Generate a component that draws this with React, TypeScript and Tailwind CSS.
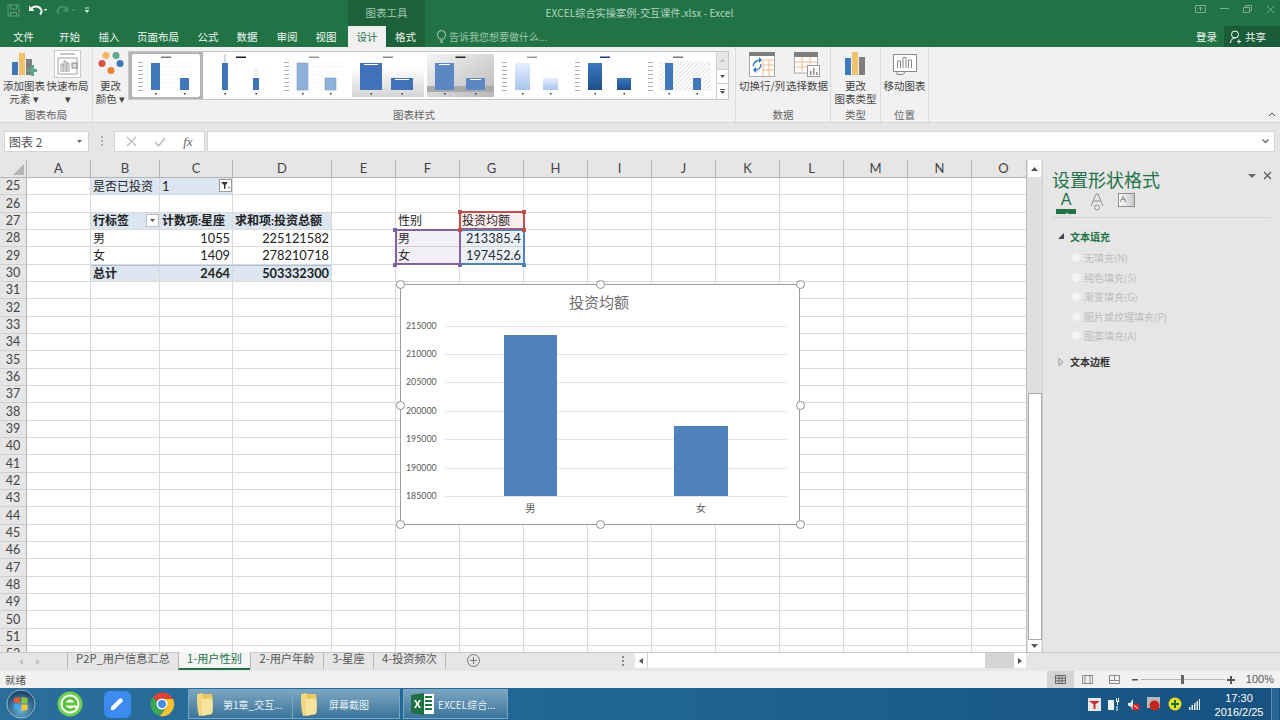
import React from "react";

const CJK = '"Noto Sans CJK SC", "Noto Sans", sans-serif';
const CELL = 'Lato, "Noto Sans CJK SC", sans-serif';

const COLS = ["A", "B", "C", "D", "E", "F", "G", "H", "I", "J", "K", "L", "M", "N", "O"];
const ROWS = Array.from({ length: 28 }, (_, i) => 25 + i);

type Cell = { t?: string; c?: string };
const cells: Record<string, Cell> = {
  B25: { t: "是否已投资", c: "bg-[#dce6f1]" },
  C25: { t: "1", c: "bg-[#dce6f1]" },
  B27: { t: "行标签", c: "bg-[#dce6f1] font-bold" },
  C27: { t: "计数项:星座", c: "bg-[#dce6f1] font-bold" },
  D27: { t: "求和项:投资总额", c: "bg-[#dce6f1] font-bold" },
  B28: { t: "男" },
  C28: { t: "1055", c: "justify-end" },
  D28: { t: "225121582", c: "justify-end" },
  B29: { t: "女" },
  C29: { t: "1409", c: "justify-end" },
  D29: { t: "278210718", c: "justify-end" },
  B30: { t: "总计", c: "bg-[#dce6f1] font-bold border-t border-t-[#a6c0dd]" },
  C30: { t: "2464", c: "bg-[#dce6f1] font-bold justify-end border-t border-t-[#a6c0dd]" },
  D30: { t: "503332300", c: "bg-[#dce6f1] font-bold justify-end border-t border-t-[#a6c0dd]" },
  F27: { t: "性别" },
  G27: { t: "投资均额" },
  F28: { t: "男" },
  G28: { t: "213385.4", c: "justify-end" },
  F29: { t: "女" },
  G29: { t: "197452.6", c: "justify-end" },
};

function QatIcons() {
  return (
    <div className="flex items-center h-[20px] pl-[7px] gap-[8px]">
      <svg width="13" height="13" viewBox="0 0 13 13" fill="none" stroke="#5f9b7c" strokeWidth="1">
        <path d="M1 1h11v11H1z" />
        <path d="M3.5 1v4h6V1M3.5 12V8.5h6V12" />
      </svg>
      <svg width="20" height="12" viewBox="0 0 20 12" fill="none">
        <path d="M2.5 5.5C5 2 10 1.500 12.5 4.500c1.500 2 1 4.500-.5 6" stroke="#fff" strokeWidth="2" />
        <path d="M1 1.5v5.500h5.500z" fill="#fff" />
        <path d="M15.500 5h4l-2 2z" fill="#dfeee6" />
      </svg>
      <svg width="20" height="12" viewBox="0 0 20 12" fill="none">
        <path d="M11 5.500C9 2.500 4.500 2 2.500 4.500 1 6.500 1.500 8.500 2.500 10" stroke="#4f916f" strokeWidth="1.800" />
        <path d="M12 2v5.500H7z" fill="#4f916f" />
        <path d="M15.500 5h4l-2 2z" fill="#4f916f" />
      </svg>
      <svg width="6" height="7" viewBox="0 0 6 7">
        <path d="M1 0.5h4v1H1zM0.5 3h5L3 6z" fill="#d9ebe1" />
      </svg>
    </div>
  );
}

function TabLabel({ t, active }: { t: string; active?: boolean }) {
  return (
    <div
      className={
        "h-[21px] flex items-center justify-center text-[10.5px] " +
        (active ? "bg-[#f1f1f1] text-[#217346]" : "text-[#f0f6f2]")
      }
    >
      {t}
    </div>
  );
}

function Thumb({
  w,
  bg,
  fill,
  stroke,
  grid,
  ticks,
  title,
  stems,
  label,
  hatch,
  floor,
  x1,
  x2,
  bw,
}: {
  w: number;
  bg: string;
  fill: string;
  stroke?: string;
  grid?: boolean;
  ticks?: boolean;
  title: string;
  stems?: boolean;
  label?: boolean;
  hatch?: boolean;
  floor?: boolean;
  x1: number;
  x2: number;
  bw: number;
}) {
  const id = "hatch" + x1 + x2 + bw;
  return (
    <svg width={w} height="43" viewBox={`0 0 ${w} 43`} className="shrink-0">
      <defs>
        <pattern id={id} width="3" height="3" patternUnits="userSpaceOnUse" patternTransform="rotate(45)">
          <rect width="3" height="3" fill="#ffffff" />
          <rect width="1" height="3" fill="#e2e2e2" />
        </pattern>
        <linearGradient id="silver" x1="0" y1="0" x2="1" y2="1">
          <stop offset="0" stopColor="#f4f4f4" />
          <stop offset="1" stopColor="#b9b9b9" />
        </linearGradient>
        <linearGradient id="pale" x1="0" y1="0" x2="0" y2="1">
          <stop offset="0" stopColor="#e6efff" />
          <stop offset="1" stopColor="#a9c4ee" />
        </linearGradient>
        <linearGradient id="deep" x1="0" y1="0" x2="0" y2="1">
          <stop offset="0" stopColor="#3a78c0" />
          <stop offset="1" stopColor="#1f4f8b" />
        </linearGradient>
        <linearGradient id="fade" x1="0" y1="0" x2="0" y2="1">
          <stop offset="0.3" stopColor="#ffffff" />
          <stop offset="1" stopColor="#d4d4d4" />
        </linearGradient>
      </defs>
      <rect width={w} height="43" fill={bg} />
      {hatch && <rect x={16} y="7" width={w - 18} height="30" fill={`url(#${id})`} />}
      {floor && <rect width={w} height="6" y="32" fill="#aaaaaa" />}
      <rect x={w / 2 - 5} y="2.5" width="10" height="1.5" fill={title} />
      {grid &&
        [9, 13, 17, 21, 25, 29, 33, 36].map((y) => (
          <line key={y} x1={12} x2={w - 4} y1={y} y2={y} stroke="#f0f0f0" strokeWidth="0.5" />
        ))}
      {ticks &&
        [8, 12, 16, 20, 24, 28, 32, 36].map((y) => (
          <rect key={y} x={5} y={y} width="5" height="0.8" fill="#9c9c9c" />
        ))}
      {stems && (
        <>
          <line x1={x1 + bw / 2} x2={x1 + bw / 2} y1="0" y2="10" stroke="#b0b0b0" />
          <line x1={x2 + bw / 2} x2={x2 + bw / 2} y1="15" y2="25" stroke="#c4c4c4" strokeDasharray="1 1" />
        </>
      )}
      <rect x={x1} y="9" width={bw} height="27" fill={fill} stroke={stroke} strokeWidth="0.5" />
      <rect x={x2} y="24" width={bw} height="12" fill={fill} stroke={stroke} strokeWidth="0.5" />
      {label && (
        <>
          <rect x={x1 + 4} y="10" width={bw - 8} height="1" fill="#ffffff" />
          <rect x={x2 + 4} y="25" width={bw - 8} height="1" fill="#ffffff" />
        </>
      )}
      <rect x={x1 + bw / 2 - 0.5} y="39" width="1.5" height="1.5" fill="#333" />
      <rect x={x2 + bw / 2 - 0.5} y="39" width="1.5" height="1.5" fill="#333" />
    </svg>
  );
}

function RibbonButton({ icon, lines, w }: { icon: React.ReactNode; lines: string[]; w: string }) {
  return (
    <div className={"flex flex-col items-center text-[10.5px] leading-[13px] text-[#444] " + w}>
      <div className="h-[28px] flex items-center justify-center">{icon}</div>
      <div className="mt-[1px] text-center whitespace-nowrap">
        {lines.map((l) => (
          <div key={l}>{l}</div>
        ))}
      </div>
    </div>
  );
}

function Group({
  label,
  children,
  className,
}: {
  label: string;
  children: React.ReactNode;
  className: string;
}) {
  return (
    <div className={"flex flex-col h-full border-r border-r-[#dcdcdc] " + className}>
      <div className="flex-1 flex items-start pt-[3px] min-h-0">{children}</div>
      <div className="h-[16px] pt-[2px] text-center text-[10.5px] leading-[13px] text-[#666] whitespace-nowrap">{label}</div>
    </div>
  );
}

function AddElementIcon() {
  return (
    <svg width="26" height="24" viewBox="0 0 26 24">
      <rect x="1" y="10" width="6" height="13" fill="#3f78b9" />
      <rect x="8" y="1" width="6" height="22" fill="#f2c26b" />
      <rect x="15" y="7" width="6" height="16" fill="#7e7e7e" />
      <path d="M20 13h3v4h3v3h-3v4h-3v-4h-4v-3h4z" fill="#5aa687" />
    </svg>
  );
}
function QuickLayoutIcon() {
  return (
    <svg width="27" height="28" viewBox="0 0 27 28" fill="none">
      <rect x="0.5" y="0.5" width="26" height="27" fill="#fff" stroke="#c8c8c8" />
      <path d="M6 4h15" stroke="#8a8a8a" />
      <rect x="4" y="8" width="19" height="16" stroke="#a0a0a0" />
      <path d="M7 22V14h2v8M10 22V11h2v11M13 22v-9h2v9" stroke="#888" strokeWidth="0.8" />
      <rect x="18" y="13" width="5" height="5" stroke="#888" fill="#e0e0e0" />
    </svg>
  );
}
function ColorsIcon() {
  return (
    <svg width="26" height="26" viewBox="0 0 26 26">
      <circle cx="8" cy="4.5" r="3.5" fill="#f4b35e" />
      <circle cx="18" cy="4.5" r="3.5" fill="#5ea78b" />
      <circle cx="4" cy="12.5" r="3.5" fill="#d9503f" />
      <circle cx="22" cy="12.5" r="3.5" fill="#3f78b9" />
      <circle cx="13" cy="19.5" r="3.5" fill="#ec8235" />
    </svg>
  );
}
function SwitchIcon() {
  return (
    <svg width="26" height="25" viewBox="0 0 26 25" fill="none">
      <rect x="0.5" y="0.5" width="25" height="24" fill="#fff" stroke="#aaa" />
      <rect x="0" y="0" width="26" height="4" fill="#7f7f7f" />
      <path d="M14 8h11M14 13h11M14 18h11M14 8v16M20 8v16" stroke="#f0b98a" />
      <path d="M4 14c1-4 4-6 8-6" stroke="#2e75b6" strokeWidth="1.3" />
      <path d="M10 5l3 3-3 3z" fill="#2e75b6" />
      <path d="M12 12c0 4-3 6-6 6" stroke="#2e75b6" strokeWidth="1.3" />
      <path d="M7 15l-3 3 3 3z" fill="#2e75b6" />
    </svg>
  );
}
function SelectDataIcon() {
  return (
    <svg width="26" height="25" viewBox="0 0 26 25" fill="none">
      <rect x="0.5" y="2" width="23" height="19" fill="#fff" stroke="#aaa" />
      <rect x="0" y="0" width="24" height="5" fill="#7f7f7f" />
      <path d="M1 10h22M1 15h22M8 5v16M16 5v16" stroke="#f0b98a" />
      <rect x="13.5" y="13.5" width="12" height="11" fill="#fff" stroke="#999" />
      <path d="M16 23v-4h1.500v4zM19 23v-7h1.500v7zM22 23v-3h1.500v3z" fill="#8b8b8b" />
    </svg>
  );
}
function ChangeTypeIcon() {
  return (
    <svg width="21" height="24" viewBox="0 0 21 24">
      <rect x="0" y="6" width="6" height="17" fill="#3f78b9" />
      <rect x="7" y="0" width="6" height="23" fill="#f2c26b" />
      <rect x="14" y="5" width="6" height="18" fill="#7e7e7e" />
    </svg>
  );
}
function MoveChartIcon() {
  return (
    <svg width="24" height="21" viewBox="0 0 24 21" fill="none" stroke="#8a8a8a">
      <rect x="0.5" y="0.5" width="23" height="17" fill="#fff" />
      <path d="M4.5 14V7h3v7M10 14V3.500h3V14M15.500 14V6h3v8" />
      <path d="M4 18v2.500h6l2-2.500" />
    </svg>
  );
}

function Ribbon() {
  return (
    <div className="h-[76px] bg-[#f1f1f1] border-b border-b-[#d8d8d8] flex text-[#444] relative">
      <Group label="图表布局" className="w-[93px]">
        <RibbonButton w="w-[44px] ml-[2px]" icon={<AddElementIcon />} lines={["添加图表", "元素 ▾"]} />
        <RibbonButton w="w-[43px]" icon={<QuickLayoutIcon />} lines={["快速布局", "▾"]} />
      </Group>
      <Group label="图表样式" className="w-[643px]">
        <div className="w-[35px]">
          <RibbonButton w="w-[35px]" icon={<ColorsIcon />} lines={["更改", "颜色 ▾"]} />
        </div>
        <div className="flex h-[49px] w-[601px] mt-[1px] border border-[#c6c6c6] bg-white">
          <div className="flex items-center flex-1 gap-[3px] overflow-hidden">
            <div className="border-[3px] border-[#b5b5b5] h-[47px] w-[74px] shrink-0 flex items-center justify-center">
              <Thumb w={66} bg="#ffffff" fill="#3f78b9" grid ticks title="#777" x1={18} x2={47} bw={9} />
            </div>
            <Thumb w={70} bg="#ffffff" fill="#3f78b9" title="#222" stems x1={16} x2={47} bw={6} />
            <Thumb w={70} bg="#ffffff" fill="#8eb0db" stroke="#6f97c9" grid ticks title="#999" x1={18} x2={46} bw={11} />
            <Thumb w={72} bg="url(#fade)" fill="#3f72b9" title="#888" label x1={8} x2={39} bw={22} />
            <Thumb w={67} bg="url(#silver)" fill="#5b88c2" title="#222" label floor x1={8} x2={39} bw={19} />
            <Thumb w={70} bg="#ffffff" fill="url(#pale)" ticks title="#999" x1={18} x2={46} bw={15} />
            <Thumb w={70} bg="#ffffff" fill="url(#deep)" ticks title="#1f3f77" x1={18} x2={47} bw={14} />
            <Thumb w={70} bg="#ffffff" fill="#3f78b9" ticks title="#777" hatch x1={22} x2={50} bw={8} />
          </div>
          <div className="w-[12px] flex flex-col border-l border-l-[#d0d0d0] bg-white text-[#666]">
            <div className="h-[17px] bg-[#e6e6e6] flex items-center justify-center">
              <svg width="5" height="3"><path d="M0 3h5L2.5 0z" fill="#bbb" /></svg>
            </div>
            <div className="h-[15px] flex items-center justify-center border-y border-y-[#d0d0d0]">
              <svg width="5" height="3"><path d="M0 0h5L2.5 3z" fill="#555" /></svg>
            </div>
            <div className="flex-1 flex items-center justify-center">
              <svg width="5" height="6"><path d="M0 0h5v1H0zM0 2h5L2.5 5z" fill="#555" /></svg>
            </div>
          </div>
        </div>
      </Group>
      <Group label="数据" className="w-[95px]">
        <RibbonButton w="w-[46px] ml-[3px]" icon={<SwitchIcon />} lines={["切换行/列"]} />
        <RibbonButton w="w-[44px]" icon={<SelectDataIcon />} lines={["选择数据"]} />
      </Group>
      <Group label="类型" className="w-[50px]">
        <RibbonButton w="w-[49px]" icon={<ChangeTypeIcon />} lines={["更改", "图表类型"]} />
      </Group>
      <Group label="位置" className="w-[48px]">
        <RibbonButton w="w-[47px]" icon={<MoveChartIcon />} lines={["移动图表"]} />
      </Group>
      <div className="absolute right-[4px] bottom-[5px]">
        <svg width="8" height="5" viewBox="0 0 8 5" fill="none" stroke="#555">
          <path d="M1 4l3-3 3 3" />
        </svg>
      </div>
    </div>
  );
}

function TitleBar() {
  return (
    <div className="h-[47px] bg-[#217346] flex text-[#e8f1ec]">
      <div className="w-[348px] flex flex-col">
        <QatIcons />
        <div className="mt-[6px] flex">
          {[
            ["文件", 47],
            ["开始", 45],
            ["插入", 34],
            ["页面布局", 64],
            ["公式", 36],
            ["数据", 42],
            ["审阅", 38],
            ["视图", 40],
          ].map(([t, w]) => (
            <div key={t} style={{ width: w as number }}>
              <TabLabel t={t as string} />
            </div>
          ))}
        </div>
      </div>
      <div className="w-[77px] bg-[#1c6139] flex flex-col">
        <div className="h-[26px] flex items-center justify-center text-[10.5px] text-[#9fc7b0]">图表工具</div>
        <div className="flex">
          <div className="w-[38px]">
            <TabLabel t="设计" active />
          </div>
          <div className="w-[39px]">
            <TabLabel t="格式" />
          </div>
        </div>
      </div>
      <div className="flex-1 flex flex-col relative">
        <div className="h-[26px] flex items-center justify-between pr-[5px]">
          <div className="w-[415px] text-center text-[10.2px] text-[#b5d3c2] whitespace-nowrap ml-[7px]">
            EXCEL综合实操案例-交互课件.xlsx - Excel
          </div>
          <div className="flex items-center gap-[14px] -mt-[8px]">
            <svg width="11" height="8" viewBox="0 0 11 8" fill="none" stroke="#78ad90"><path d="M.5.5h10v7H.5zM5.5 6V2M3.5 4l2-2 2 2" /></svg>
            <svg width="9" height="2"><rect width="9" height="1" fill="#78ad90" /></svg>
            <svg width="9" height="8" viewBox="0 0 9 8" fill="none" stroke="#78ad90"><path d="M.5 2.5h6v5h-6zM2.5 2.5v-2h6v5h-2" /></svg>
            <svg width="9" height="9" viewBox="0 0 9 9" stroke="#78ad90"><path d="M1 1l7 7M8 1L1 8" /></svg>
          </div>
        </div>
        <div className="flex items-center h-[21px]">
          <div className="flex items-center gap-[3px] ml-[12px] text-[10px] text-[#9dc6ae]">
            <svg width="9" height="13" viewBox="0 0 9 13" fill="none" stroke="#b5d3c2"><path d="M2.5 9C1 7.500.5 6.500.5 4.500a4 4 0 0 1 8 0c0 2-.5 3-2 4.500zM3 11h3M3.500 12.500h2" /></svg>
            <span>告诉我您想要做什么...</span>
          </div>
          <div className="ml-auto text-[10.5px] text-[#f0f6f2] mr-[7px]">登录</div>
          <div className="w-[56px] h-[21px] bg-[#195c37] flex items-center pl-[6px] gap-[3px] text-[10.5px] text-[#f0f6f2]">
            <svg width="12" height="14" viewBox="0 0 12 14" fill="none" stroke="#fff"><circle cx="5" cy="4.5" r="3.5" /><path d="M.5 13c0-3 2-5 4.500-5M9 9.500v4M7 11.500h4" /></svg>
            <span>共享</span>
          </div>
        </div>
      </div>
    </div>
  );
}

function FormulaBar() {
  return (
    <div className="h-[37px] bg-[#e6e6e6] flex items-start pt-[8px] pl-[4px] pr-[5px]">
      <div className="w-[85px] h-[21px] bg-white border border-[#d4d4d4] flex items-center justify-between pl-[4px] pr-[6px] text-[12px] text-[#555]">
        <span>图表 2</span>
        <svg width="5" height="3"><path d="M0 0h5L2.5 3z" fill="#666" /></svg>
      </div>
      <div className="w-[25px] h-[21px] flex items-center justify-center">
        <svg width="2" height="11"><path d="M0 0h2v2H0zM0 4h2v2H0zM0 8h2v2H0z" fill="#b0b0b0" /></svg>
      </div>
      <div className="w-[91px] h-[21px] bg-white border border-[#d4d4d4] flex items-center justify-around px-[3px]">
        <svg width="11" height="11" viewBox="0 0 11 11" stroke="#bbb" strokeWidth="1.2"><path d="M1 1l9 9M10 1l-9 9" /></svg>
        <svg width="12" height="10" viewBox="0 0 12 10" fill="none" stroke="#bbb" strokeWidth="1.5"><path d="M1 5l3.500 4L11 1" /></svg>
        <span className="italic text-[13px] text-[#666] font-['Liberation_Serif',serif]">fx</span>
      </div>
      <div className="flex-1 h-[21px] ml-[2px] bg-white border border-[#d4d4d4] flex items-center justify-end pr-[5px]">
        <svg width="7" height="5" viewBox="0 0 7 5" fill="none" stroke="#666" strokeWidth="1.3"><path d="M.5.5l3 3 3-3" /></svg>
      </div>
    </div>
  );
}

function Handle({ className }: { className: string }) {
  return <div className={"absolute w-[9px] h-[9px] rounded-full bg-white border-[1.5px] border-[#8f8f8f] " + className} />;
}

function SheetGrid() {
  return (
    <div className="relative flex-1 h-full overflow-hidden bg-white" style={{ fontFamily: CELL }}>
      <div className="grid w-[1036px] grid-cols-[27px_64px_69px_73px_99px_64px_64px_64px_64px_64px_64px_64px_64px_64px_64px_64px] grid-rows-[18px_repeat(28,17.33px)]">
        <div className="bg-[#e6e6e6] border-r border-b border-[#b5b5b5] relative">
          <svg className="absolute right-[2px] bottom-[2px]" width="11" height="11"><path d="M11 0v11H0z" fill="#b4b4b4" /></svg>
        </div>
        {COLS.map((c) => (
          <div key={c} className="bg-[#e6e6e6] border-r border-r-[#b5b5b5] border-b border-b-[#b5b5b5] flex items-center justify-center text-[13px] text-[#444]">
            {c}
          </div>
        ))}
        {ROWS.map((r) => (
          <React.Fragment key={r}>
            <div className="bg-[#e6e6e6] border-r border-r-[#b5b5b5] border-b border-b-[#cfcfcf] flex items-center justify-center pt-[1px] text-[12.5px] leading-none text-[#444]">
              {r}
            </div>
            {COLS.map((c) => {
              const cell = cells[c + r];
              const numeric = cell?.t ? /^[\d.]+$/.test(cell.t) : false;
              return (
                <div
                  key={c}
                  className={
                    "border-r border-r-[#dadada] border-b border-b-[#dadada] flex items-center px-[2px] leading-none text-[#222] whitespace-nowrap min-w-0 " +
                    (numeric ? "text-[12.8px] " : "text-[12px] pt-[1px] ") +
                    (cell?.c ?? "")
                  }
                >
                  {cell?.t}
                </div>
              );
            })}
          </React.Fragment>
        ))}
      </div>

      <div className="absolute left-[219px] top-[19px] w-[13px] h-[13px] bg-white border border-[#9c9c9c] flex items-center justify-center">
        <svg width="9" height="8" viewBox="0 0 9 8"><path d="M0 0h7L4.5 3v3.500L3 7V3z" fill="#333" /><path d="M7.5 4.500l1.500 1-1.500 1z" fill="#333" /></svg>
      </div>
      <div className="absolute left-[146px] top-[54px] w-[13px] h-[13px] bg-white border border-[#c0c0c0] flex items-center justify-center">
        <svg width="5" height="3"><path d="M0 0h5L2.5 3z" fill="#555" /></svg>
      </div>

      {/* range highlights */}
      <div className="absolute left-[459px] top-[51px] w-[66px] h-[19px] border-2 border-[#c0504d] bg-[#c0504d]/10" />
      <div className="absolute left-[395px] top-[69px] w-[66px] h-[36px] border-2 border-[#8064a2] bg-[#8064a2]/10" />
      <div className="absolute left-[459px] top-[69px] w-[66px] h-[36px] border-2 border-[#4f81bd] bg-[#4f81bd]/10 border-l-[#8064a2]" />
      {[
        ["left-[458px] top-[50px]", "bg-[#c0504d]"],
        ["left-[522px] top-[50px]", "bg-[#c0504d]"],
        ["left-[458px] top-[68px]", "bg-[#c0504d]"],
        ["left-[522px] top-[68px]", "bg-[#c0504d]"],
        ["left-[393px] top-[68px]", "bg-[#8064a2]"],
        ["left-[393px] top-[103px]", "bg-[#8064a2]"],
        ["left-[458px] top-[103px]", "bg-[#8064a2]"],
        ["left-[522px] top-[103px]", "bg-[#4f81bd]"],
      ].map(([p, c]) => (
        <div key={p} className={"absolute w-[4px] h-[4px] " + p + " " + c} />
      ))}

      {/* chart */}
      <div className="absolute left-[400px] top-[124px] w-[400px] h-[241px] bg-white border border-[#9f9f9f] pl-[5px]">
        <div className="text-center text-[15px] leading-[20px] pt-[7px] pr-[7px] text-[#6f6f6f] h-[41px]">投资均额</div>
        <div className="relative w-[381px] h-[172px]">
          {[215000, 210000, 205000, 200000, 195000, 190000, 185000].map((v, i) => (
            <div key={v} className="absolute left-0 right-0 flex items-center h-[10px]" style={{ top: i * 28.4 - 5 }}>
              <span className="w-[39px] text-[8.8px] leading-none text-[#595959]">{v}</span>
              <div className="flex-1 h-px bg-[#e4e4e4]" />
            </div>
          ))}
          <div className="absolute left-[98px] top-[9px] w-[53px] h-[161px] bg-[#4f81bd]" />
          <div className="absolute left-[268px] top-[100px] w-[54px] h-[70px] bg-[#4f81bd]" />
          <div className="absolute left-[98px] top-[177px] w-[53px] text-center text-[10px] leading-none text-[#595959]">男</div>
          <div className="absolute left-[268px] top-[177px] w-[54px] text-center text-[10px] leading-none text-[#595959]">女</div>
        </div>
      </div>
      <Handle className="left-[396px] top-[120px]" />
      <Handle className="left-[596px] top-[120px]" />
      <Handle className="left-[796px] top-[120px]" />
      <Handle className="left-[396px] top-[241px]" />
      <Handle className="left-[796px] top-[241px]" />
      <Handle className="left-[396px] top-[360px]" />
      <Handle className="left-[596px] top-[360px]" />
      <Handle className="left-[796px] top-[360px]" />
    </div>
  );
}

function VScroll() {
  return (
    <div className="w-[16px] h-full bg-[#e0e0e0] flex flex-col items-center border-l border-l-[#bcbcbc]">
      <div className="w-[13px] h-[17px] bg-white flex items-center justify-center">
        <svg width="7" height="4"><path d="M0 4h7L3.5 0z" fill="#555" /></svg>
      </div>
      <div className="flex-1 w-full flex flex-col justify-end">
        <div className="h-[247px] w-[14px] mx-auto bg-white border border-[#ababab]" />
      </div>
      <div className="w-[13px] h-[12px] bg-white flex items-center justify-center">
        <svg width="7" height="4"><path d="M0 0h7L3.5 4z" fill="#555" /></svg>
      </div>
    </div>
  );
}

function FormatPane() {
  const radios = ["无填充(N)", "纯色填充(S)", "渐变填充(G)", "图片或纹理填充(P)", "图案填充(A)"];
  return (
    <div className="w-[238px] h-full bg-[#e6e6e6] border-l border-l-[#cfcfcf] relative pl-[9px] pt-[6px]">
      <div className="text-[18px] leading-[26px] text-[#217346]">设置形状格式</div>
      <div className="absolute right-[8px] top-[11px] flex items-center gap-[7px]">
        <svg width="8" height="4"><path d="M0 0h8L4 4z" fill="#666" /></svg>
        <svg width="9" height="9" viewBox="0 0 9 9" stroke="#555" strokeWidth="1.2"><path d="M1 1l7 7M8 1L1 8" /></svg>
      </div>
      <div className="flex items-start gap-[14px] ml-[4px] h-[26px]">
        <div className="w-[20px] flex flex-col items-center">
          <span className="text-[16px] leading-[16px] text-[#217346] font-['Liberation_Sans',sans-serif]">A</span>
          <div className="w-[20px] h-[5px] bg-[#217346] mt-[1px]" />
        </div>
        <svg width="14" height="19" viewBox="0 0 14 19" fill="none" stroke="#8f8f8f">
          <path d="M1 14L6 2h2l5 12M3.5 9h7" />
          <circle cx="7" cy="15.5" r="2.5" fill="#e6e6e6" />
        </svg>
        <div className="w-[17px] h-[14px] mt-[1px] border border-[#8f8f8f] bg-gradient-to-r from-white to-[#c8c8c8] text-[9px] leading-[11px] pl-[1px] text-[#555] font-['Liberation_Sans',sans-serif]">
          A
        </div>
      </div>
      <div className="relative h-px bg-[#d4d4d4] mr-[10px] mt-[-1px]">
        <svg className="absolute left-[9px] -top-[5px]" width="12" height="6" fill="none" stroke="#cfcfcf"><path d="M0 6l6-5 6 5" /></svg>
      </div>
      <div className="flex items-center h-[22px] mt-[7px] text-[10px] font-bold">
        <svg className="ml-[6px] mr-[6px]" width="6" height="6"><path d="M6 0v6H0z" fill="#444" /></svg>
        <span className="text-[#217346]">文本填充</span>
      </div>
      <div className="flex flex-col ml-[20px] mt-[1px]">
        {radios.map((r) => (
          <div key={r} className="h-[19.5px] flex items-center gap-[3px] text-[10px] text-[#bdbdbd] whitespace-nowrap">
            <div className="w-[9px] h-[9px] rounded-full bg-[#f3f3f3]" />
            <span>{r}</span>
          </div>
        ))}
      </div>
      <div className="flex items-center h-[20px] mt-[6px] text-[10px] font-bold text-[#333]">
        <svg className="ml-[6px] mr-[6px]" width="6" height="8" fill="none" stroke="#999"><path d="M1 .5l4 3.500-4 3.500z" /></svg>
        <span>文本边框</span>
      </div>
    </div>
  );
}

function SheetTabs() {
  const tabs = [
    ["P2P_用户信息汇总", 111],
    ["1-用户性别", 72],
    ["2-用户年龄", 73],
    ["3-星座", 50],
    ["4-投资频次", 72],
  ] as const;
  return (
    <div className="h-[19px] bg-[#e6e6e6] flex items-start text-[11.2px] leading-none text-[#555] border-t border-t-[#c8c8c8]">
      <div className="w-[67px] h-[17px] flex items-center pl-[19px] gap-[13px] shrink-0">
        <svg width="4" height="6"><path d="M4 0v6L0 3z" fill="#c2c2c2" /></svg>
        <svg width="4" height="6"><path d="M0 0v6l4-3z" fill="#c2c2c2" /></svg>
      </div>
      {tabs.map(([t, w], i) => (
        <div
          key={t}
          style={{ width: w }}
          className={
            "shrink-0 flex items-center justify-center whitespace-nowrap border-l border-l-[#b8b8b8] " +
            (i === 1 ? "h-[18px] -mt-px pb-[3px] bg-[#f5f5f5] text-[#217346] border-b-2 border-b-[#217346]" : "h-[16px] pb-[5px]")
          }
        >
          {t}
        </div>
      ))}
      <div className="h-[16px] border-l border-l-[#b8b8b8] shrink-0" />
      <div className="ml-[21px] mt-[1px] w-[15px] shrink-0">
        <svg width="13" height="13" viewBox="0 0 13 13" fill="none" stroke="#777"><circle cx="6.5" cy="6.5" r="6" /><path d="M6.5 3v7M3 6.500h7" /></svg>
      </div>
      <div className="ml-[130px] w-[22px] h-[15px] flex items-center justify-center shrink-0">
        <svg width="2" height="10"><path d="M0 0h2v2H0zM0 4h2v2H0zM0 8h2v2H0z" fill="#888" /></svg>
      </div>
      <div className="w-[12px] h-[15px] ml-px bg-white flex items-center justify-center shrink-0">
        <svg width="4" height="6"><path d="M4 0v6L0 3z" fill="#555" /></svg>
      </div>
      <div className="w-[339px] h-[15px] bg-white border-x border-[#d4d4d4] shrink-0" />
      <div className="w-[28px] h-[15px] bg-[#d4d4d4] shrink-0" />
      <div className="w-[12px] h-[15px] bg-white flex items-center justify-center shrink-0">
        <svg width="4" height="6"><path d="M0 0v6l4-3z" fill="#555" /></svg>
      </div>
    </div>
  );
}

function StatusBar() {
  return (
    <div className="h-[17px] bg-[#f1f1f1] flex items-center text-[10.5px] text-[#555]">
      <span className="pl-[5px]">就绪</span>
      <div className="ml-auto flex items-center h-full">
        <div className="w-[27px] h-full bg-[#d4d4d4] flex items-center justify-center">
          <svg width="11" height="9" viewBox="0 0 11 9" fill="none" stroke="#666"><path d="M.5.5h10v8H.5zM.5 3.200h10M.5 5.800h10M4 .5v8M7 .5v8" /></svg>
        </div>
        <div className="w-[28px] flex items-center justify-center">
          <svg width="11" height="9" viewBox="0 0 11 9" fill="none" stroke="#888"><path d="M.5.5h10v8H.5zM3 .5v8M8 .5v8" /></svg>
        </div>
        <div className="w-[26px] flex items-center justify-center">
          <svg width="11" height="9" viewBox="0 0 11 9" fill="none" stroke="#888"><path d="M.5.5h10v8H.5zM.5 5.500h10M5.500 .5v5" /></svg>
        </div>
        <svg className="ml-[4px]" width="6" height="2"><rect width="6" height="1.5" fill="#555" /></svg>
        <div className="relative w-[84px] h-px bg-[#b8b8b8] ml-[3px] mr-[2px]">
          <div className="absolute left-[40px] -top-[4px] w-[3px] h-[9px] bg-[#666]" />
        </div>
        <svg width="8" height="8"><path d="M3 0h2v3h3v2H5v3H3V5H0V3h3z" fill="#555" /></svg>
        <span className="ml-[11px] mr-[6px] text-[11px] font-['Liberation_Sans',sans-serif]">100%</span>
      </div>
    </div>
  );
}

function FolderIcon() {
  return (
    <svg width="18" height="25" viewBox="0 0 18 25">
      <path d="M1 2l6-1c1 4 1 8 1 22l-5 1C1 18 1 8 1 2z" fill="#f1d680" />
      <path d="M7 2h9c1 6 1 14 0 20l-9 1z" fill="#e8c560" />
      <path d="M5 7l11-1c1 6 1 11 0 16L6 24C6 18 6 12 5 7z" fill="#f7e3a0" />
    </svg>
  );
}

function TaskButton({ w, icon, label, className }: { w: string; icon: React.ReactNode; label: string; className?: string }) {
  return (
    <div
      className={
        "h-[30px] flex items-center pl-[7px] text-[10px] text-[#e8f1f7] whitespace-nowrap border border-[#7ba6c3] bg-gradient-to-b from-[#7ba6c1] to-[#3a7499] " +
        w + " " + (className ?? "")
      }
    >
      {icon}
      <span>{label}</span>
    </div>
  );
}

function Taskbar() {
  return (
    <div className="h-[32px] bg-gradient-to-r from-[#2a6e9c] via-[#1f6593] to-[#17517f] flex items-center relative">
      <div className="w-[42px] flex justify-center">
        <svg width="30" height="30" viewBox="0 0 30 30">
          <defs>
            <radialGradient id="orb" cx="0.5" cy="0.7" r="0.7">
              <stop offset="0" stopColor="#6fb5dd" />
              <stop offset="1" stopColor="#123a5a" />
            </radialGradient>
          </defs>
          <circle cx="15" cy="15" r="14" fill="url(#orb)" stroke="#b4cfdf" strokeWidth="0.8" />
          <path d="M8 9l6-1v6H8z" fill="#e05a3a" />
          <path d="M15.5 8l6 1v5.500h-6z" fill="#8cc63f" />
          <path d="M8 15.5h6V21l-6-1z" fill="#3fa9f5" />
          <path d="M15.5 15.500h6V21l-6 1z" fill="#f7c331" />
        </svg>
      </div>
      <div className="w-[56px] flex justify-center">
        <svg width="26" height="26" viewBox="0 0 26 26" fill="none">
          <circle cx="13" cy="13" r="11" fill="#fff" stroke="#6fcf4f" strokeWidth="3" />
          <path d="M6 13h13c0-3-2.500-6-6-6s-6 3-6 6 2.500 6 6 6c2 0 4-1 5-2" stroke="#5cc43c" strokeWidth="3" />
        </svg>
      </div>
      <div className="w-[38px] flex justify-center">
        <div className="w-[27px] h-[27px] rounded-[6px] bg-[#3b8bf1] flex items-center justify-center">
          <svg width="14" height="14" viewBox="0 0 14 14"><path d="M1 10L9 2c1-1 2-1 3 0s1 2 0 3l-8 8H1z" fill="#fff" /></svg>
        </div>
      </div>
      <div className="w-[52px] flex justify-center">
        <svg width="26" height="26" viewBox="0 0 26 26">
          <path d="M13 13L3.5 6.500A12 12 0 0 1 24 8H13z" fill="#d94435" />
          <path d="M13 13L3.5 6.500A12 12 0 0 0 11 25l5-8z" fill="#3aa757" />
          <path d="M13 8h11A12 12 0 0 1 11 25l6.500-9z" fill="#fbc02d" />
          <circle cx="13" cy="13" r="5.5" fill="#fff" />
          <circle cx="13" cy="13" r="4" fill="#4a8be8" />
        </svg>
      </div>
      <div className="flex">
        <TaskButton w="w-[105px]" icon={<FolderIcon />} label="第1章_交互..." className="gap-[9px]" />
        <TaskButton w="w-[107px] border-l-0" icon={<FolderIcon />} label="屏幕截图" className="gap-[11px]" />
      </div>
      <div className="ml-[3px]">
        <TaskButton
          w="w-[105px]"
          className="gap-[3px]"
          icon={
            <svg width="24" height="24" viewBox="0 0 24 24">
              <rect x="9" y="2" width="14" height="20" fill="#fff" />
              <path d="M14 5h7M14 9h7M14 13h7M14 17h7" stroke="#217346" strokeWidth="2" />
              <path d="M0 3l13-2v22L0 21z" fill="#1e7145" />
              <path d="M3 8h2l1.5 3L8 8h2l-2.500 4L10 16H8l-1.500-3L5 16H3l2.500-4z" fill="#fff" />
            </svg>
          }
          label="EXCEL综合..."
        />
      </div>
      <div className="ml-auto flex items-center h-full pr-[1px]">
        <div className="flex items-center gap-[7px] mr-[11px]">
          <div className="w-[13px] h-[13px] bg-[#e8e8e8] flex items-center justify-center">
            <svg width="11" height="9" viewBox="0 0 11 9"><path d="M0 1h11L7 4H6.500v5h-2V4H4z" fill="#d02a2a" /></svg>
          </div>
          <svg width="12" height="13" viewBox="0 0 12 13"><rect x="0" y="2" width="6" height="10" fill="#eef3f7" /><path d="M8 0h1v3h1V0h1v4h-1v3H9V4H8zM8.5 8h1v5h-1z" fill="#fff" /></svg>
          <svg width="13" height="13" viewBox="0 0 13 13"><path d="M1 5h2l3-4v11L3 8H1z" fill="#dfe9f1" /><circle cx="9" cy="9" r="3.5" fill="#e02020" /><path d="M7 7.500l4 3" stroke="#fff" /></svg>
          <svg width="14" height="14" viewBox="0 0 14 14"><rect width="13" height="11" fill="#b8b8b8" /><circle cx="7.5" cy="8.5" r="5" fill="#c8261d" /></svg>
          <svg width="14" height="14" viewBox="0 0 14 14"><circle cx="7" cy="7" r="6.5" fill="#e8df1f" /><path d="M6 3h2v3h3v2H8v3H6V8H3V6h3z" fill="#1b6d2c" /></svg>
          <svg width="11" height="11" viewBox="0 0 11 11"><path d="M0 8h1.500v3H0zM2.500 6H4v5H2.500zM5 4h1.500v7H5zM7.500 2H9v9H7.500zM10 0h1v11h-1z" fill="#e9eef2" /></svg>
        </div>
        <div className="w-[56px] pt-[2px] text-center text-[11px] leading-[14px] text-white font-['Liberation_Sans',sans-serif]">
          <div>17:30</div>
          <div>2016/2/25</div>
        </div>
        <div className="w-[8px] h-full ml-[4px] border-l border-l-[#5b8cb0] bg-[#3a77a3]/50" />
      </div>
    </div>
  );
}

export default function App() {
  return (
    <div className="w-[1280px] h-[720px] overflow-hidden flex flex-col" style={{ fontFamily: CJK }}>
      <TitleBar />
      <Ribbon />
      <FormulaBar />
      <div className="h-[492px] flex">
        <div className="w-[1026px] h-full overflow-hidden flex">
          <SheetGrid />
        </div>
        <VScroll />
        <FormatPane />
      </div>
      <SheetTabs />
      <StatusBar />
      <Taskbar />
    </div>
  );
}
